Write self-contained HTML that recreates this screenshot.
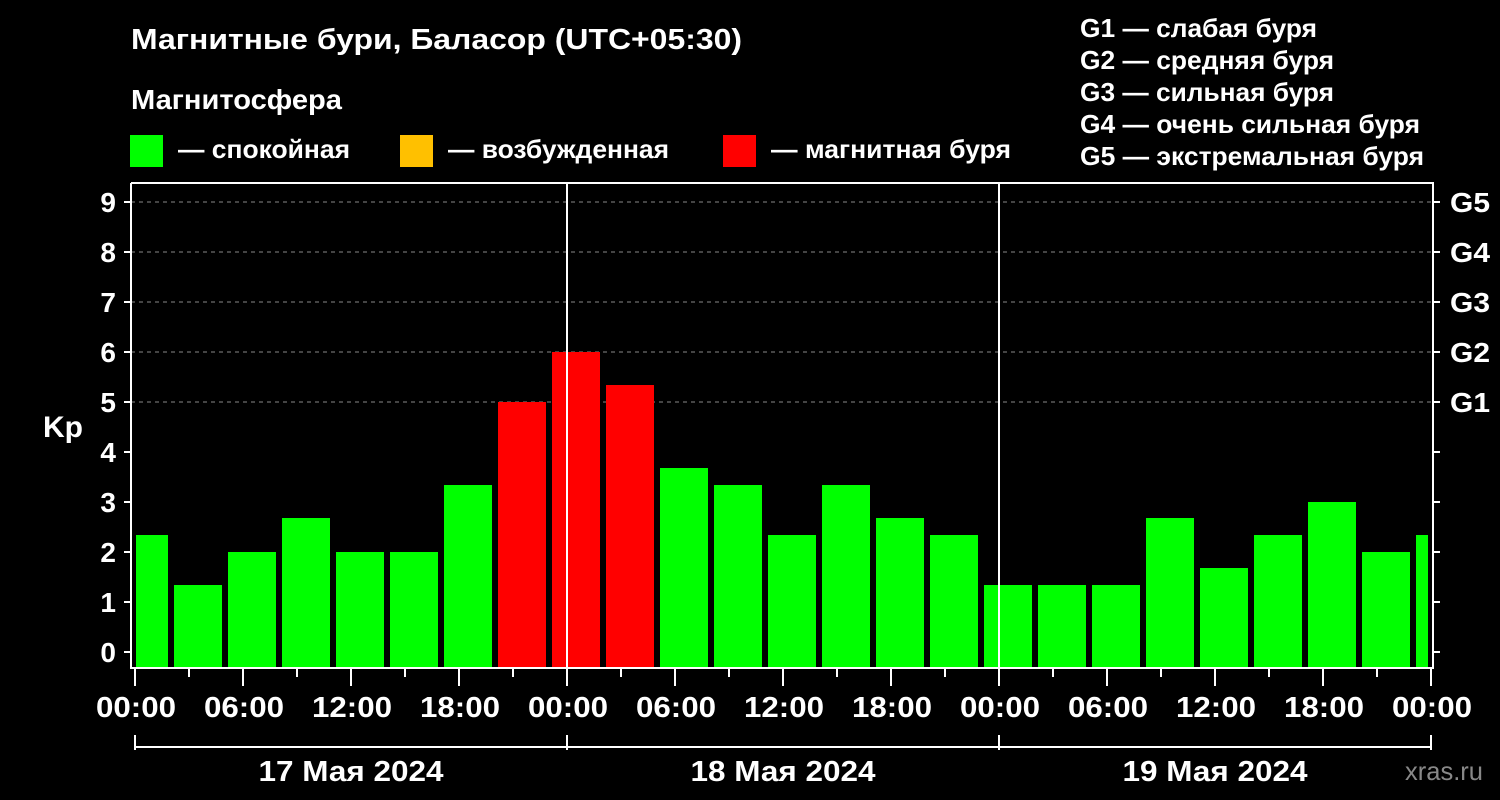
<!DOCTYPE html>
<html><head><meta charset="utf-8"><style>html,body{margin:0;padding:0;background:#000;}svg{display:block}</style></head>
<body>
<svg width="1500" height="800" xmlns="http://www.w3.org/2000/svg" style="font-family:'Liberation Sans',Arial,sans-serif;font-weight:bold" fill="#fff">
<rect width="1500" height="800" fill="#000"/>
<text x="131" y="49" font-size="29" textLength="611" lengthAdjust="spacingAndGlyphs">Магнитные бури, Баласор (UTC+05:30)</text>
<text x="131" y="109" font-size="28" textLength="211" lengthAdjust="spacingAndGlyphs">Магнитосфера</text>
<rect x="130" y="135" width="33" height="32" fill="#00ff00"/>
<text x="178" y="158" font-size="26" textLength="172" lengthAdjust="spacingAndGlyphs">— спокойная</text>
<rect x="400" y="135" width="33" height="32" fill="#ffc000"/>
<text x="448" y="158" font-size="26" textLength="221" lengthAdjust="spacingAndGlyphs">— возбужденная</text>
<rect x="723" y="135" width="33" height="32" fill="#ff0000"/>
<text x="771" y="158" font-size="26" textLength="240" lengthAdjust="spacingAndGlyphs">— магнитная буря</text>
<g font-size="26">
<text x="1080" y="37" textLength="237" lengthAdjust="spacingAndGlyphs">G1 — слабая буря</text>
<text x="1080" y="69" textLength="254" lengthAdjust="spacingAndGlyphs">G2 — средняя буря</text>
<text x="1080" y="101" textLength="254" lengthAdjust="spacingAndGlyphs">G3 — сильная буря</text>
<text x="1080" y="133" textLength="340" lengthAdjust="spacingAndGlyphs">G4 — очень сильная буря</text>
<text x="1080" y="165" textLength="344" lengthAdjust="spacingAndGlyphs">G5 — экстремальная буря</text>
</g>
<g stroke="#888" stroke-dasharray="4,4" stroke-width="1">
<line x1="131" y1="202" x2="1433" y2="202"/><line x1="131" y1="252" x2="1433" y2="252"/>
<line x1="131" y1="302" x2="1433" y2="302"/><line x1="131" y1="352" x2="1433" y2="352"/>
<line x1="131" y1="402" x2="1433" y2="402"/>
</g>
<g fill="#00ff00">
<rect x="136" y="535" width="32" height="132"/>
<rect x="174" y="585" width="48" height="82"/>
<rect x="228" y="552" width="48" height="115"/>
<rect x="282" y="518" width="48" height="149"/>
<rect x="336" y="552" width="48" height="115"/>
<rect x="390" y="552" width="48" height="115"/>
<rect x="444" y="485" width="48" height="182"/>
<rect x="660" y="468" width="48" height="199"/>
<rect x="714" y="485" width="48" height="182"/>
<rect x="768" y="535" width="48" height="132"/>
<rect x="822" y="485" width="48" height="182"/>
<rect x="876" y="518" width="48" height="149"/>
<rect x="930" y="535" width="48" height="132"/>
<rect x="984" y="585" width="48" height="82"/>
<rect x="1038" y="585" width="48" height="82"/>
<rect x="1092" y="585" width="48" height="82"/>
<rect x="1146" y="518" width="48" height="149"/>
<rect x="1200" y="568" width="48" height="99"/>
<rect x="1254" y="535" width="48" height="132"/>
<rect x="1308" y="502" width="48" height="165"/>
<rect x="1362" y="552" width="48" height="115"/>
<rect x="1416" y="535" width="12" height="132"/>
</g>
<g fill="#ff0000">
<rect x="498" y="402" width="48" height="265"/>
<rect x="552" y="352" width="48" height="315"/>
<rect x="606" y="385" width="48" height="282"/>
</g>
<g stroke="#fff" stroke-width="2" fill="none">
<polyline points="131,183 131,668 1433,668 1433,183 131,183"/>
<line x1="567" y1="183" x2="567" y2="668"/><line x1="999" y1="183" x2="999" y2="668"/>
<line x1="135" y1="747" x2="1431" y2="747"/>
<line x1="135" y1="735" x2="135" y2="750"/><line x1="567" y1="735" x2="567" y2="750"/>
<line x1="999" y1="735" x2="999" y2="750"/><line x1="1431" y1="735" x2="1431" y2="750"/>
<path d="M124 652H131M124 602H131M124 552H131M124 502H131M124 452H131M124 402H131M124 352H131M124 302H131M124 252H131M124 202H131"/>
<path d="M1433 652H1440M1433 602H1440M1433 552H1440M1433 502H1440M1433 452H1440M1433 402H1440M1433 352H1440M1433 302H1440M1433 252H1440M1433 202H1440"/>
<path d="M135 668V686M243 668V686M351 668V686M459 668V686M567 668V686M675 668V686M783 668V686M891 668V686M999 668V686M1107 668V686M1215 668V686M1323 668V686M1431 668V686"/>
<path d="M189 668V677M297 668V677M405 668V677M513 668V677M621 668V677M729 668V677M837 668V677M945 668V677M1053 668V677M1161 668V677M1269 668V677M1377 668V677"/>
</g>
<g font-size="28" text-anchor="end">
<text x="116" y="662">0</text><text x="116" y="612">1</text><text x="116" y="562">2</text><text x="116" y="512">3</text><text x="116" y="462">4</text>
<text x="116" y="412">5</text><text x="116" y="362">6</text><text x="116" y="312">7</text><text x="116" y="262">8</text><text x="116" y="212">9</text>
</g>
<g font-size="28">
<text x="1450" y="212" textLength="40" lengthAdjust="spacingAndGlyphs">G5</text><text x="1450" y="262" textLength="40" lengthAdjust="spacingAndGlyphs">G4</text><text x="1450" y="312" textLength="40" lengthAdjust="spacingAndGlyphs">G3</text><text x="1450" y="362" textLength="40" lengthAdjust="spacingAndGlyphs">G2</text><text x="1450" y="412" textLength="40" lengthAdjust="spacingAndGlyphs">G1</text>
</g>
<text x="43" y="437" font-size="30">Kp</text>
<g font-size="29" text-anchor="middle">
<text x="136" y="717" textLength="80" lengthAdjust="spacingAndGlyphs">00:00</text><text x="244" y="717" textLength="80" lengthAdjust="spacingAndGlyphs">06:00</text><text x="352" y="717" textLength="80" lengthAdjust="spacingAndGlyphs">12:00</text><text x="460" y="717" textLength="80" lengthAdjust="spacingAndGlyphs">18:00</text>
<text x="568" y="717" textLength="80" lengthAdjust="spacingAndGlyphs">00:00</text><text x="676" y="717" textLength="80" lengthAdjust="spacingAndGlyphs">06:00</text><text x="784" y="717" textLength="80" lengthAdjust="spacingAndGlyphs">12:00</text><text x="892" y="717" textLength="80" lengthAdjust="spacingAndGlyphs">18:00</text>
<text x="1000" y="717" textLength="80" lengthAdjust="spacingAndGlyphs">00:00</text><text x="1108" y="717" textLength="80" lengthAdjust="spacingAndGlyphs">06:00</text><text x="1216" y="717" textLength="80" lengthAdjust="spacingAndGlyphs">12:00</text><text x="1324" y="717" textLength="80" lengthAdjust="spacingAndGlyphs">18:00</text>
<text x="1432" y="717" textLength="80" lengthAdjust="spacingAndGlyphs">00:00</text>
</g>
<g font-size="29" text-anchor="middle">
<text x="351" y="781" textLength="185" lengthAdjust="spacingAndGlyphs">17 Мая 2024</text><text x="783" y="781" textLength="185" lengthAdjust="spacingAndGlyphs">18 Мая 2024</text><text x="1215" y="781" textLength="185" lengthAdjust="spacingAndGlyphs">19 Мая 2024</text>
</g>
<text x="1405" y="780" font-size="26" fill="#888" style="font-weight:normal" textLength="78" lengthAdjust="spacingAndGlyphs">xras.ru</text>
</svg>
</body></html>
